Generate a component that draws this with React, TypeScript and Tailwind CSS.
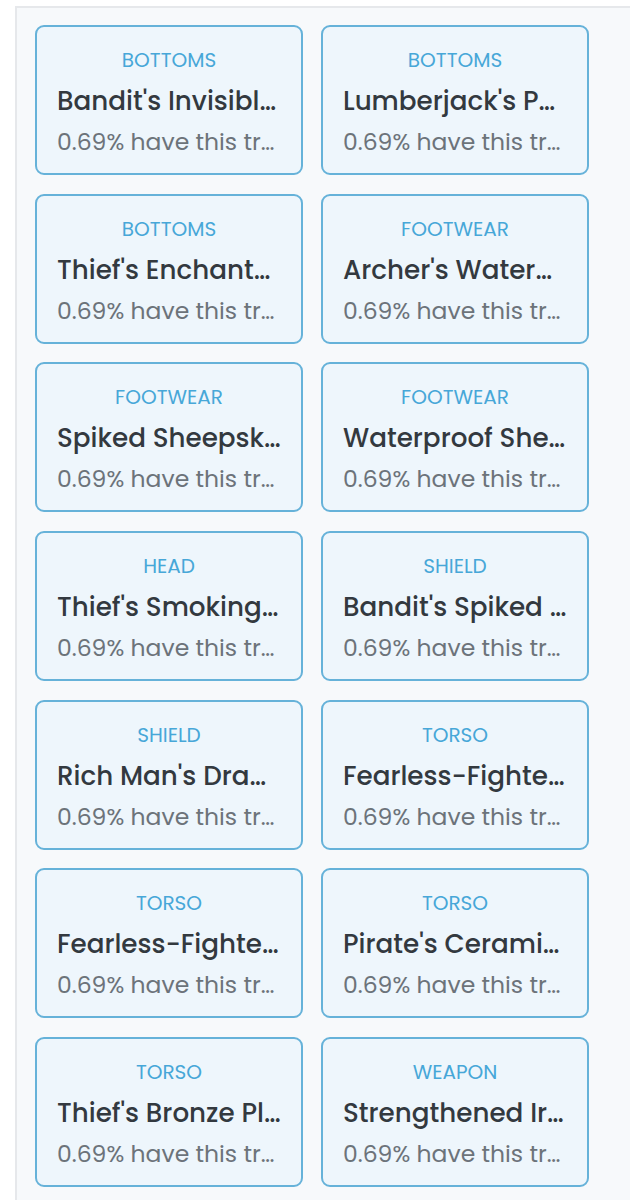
const items = [
  { cat: "BOTTOMS", name: "Bandit's Invisible Trousers" },
  { cat: "BOTTOMS", name: "Lumberjack's Pants" },
  { cat: "BOTTOMS", name: "Thief's Enchanted Pants" },
  { cat: "FOOTWEAR", name: "Archer's Waterproof Boots" },
  { cat: "FOOTWEAR", name: "Spiked Sheepskin Boots" },
  { cat: "FOOTWEAR", name: "Waterproof Sheepskin Boots" },
  { cat: "HEAD", name: "Thief's Smoking Hood" },
  { cat: "SHIELD", name: "Bandit's Spiked Shield" },
  { cat: "SHIELD", name: "Rich Man's Dragon Shield" },
  { cat: "TORSO", name: "Fearless-Fighter Armor" },
  { cat: "TORSO", name: "Fearless-Fighter Vest" },
  { cat: "TORSO", name: "Pirate's Ceramic Plate" },
  { cat: "TORSO", name: "Thief's Bronze Plate" },
  { cat: "WEAPON", name: "Strengthened Iron Sword" },
]

function TraitCard({ cat, name }: { cat: string; name: string }) {
  return (
    <div className="h-[150px] rounded-[9px] border-2 border-[#66b2d9] bg-[#eef6fc] px-5 pt-[21px] text-center">
      <div className="text-[20px] leading-[24px] text-[#47a7d8]">{cat}</div>
      <div className="mt-[12px] truncate text-[26.2px] font-medium leading-[34px] text-[#33393f]">{name}</div>
      <div className="mt-[8px] truncate text-[23.5px] leading-[32px] text-[#6c737a]">
        0.69% have this trait
      </div>
    </div>
  )
}

export default function App() {
  return (
    <div className="min-h-[1200px] bg-white pt-[6px]" style={{ fontFamily: "Poppins, 'Noto Sans', sans-serif" }}>
      <div className="ml-[15px] min-h-[1194px] border-l-2 border-t-2 border-[#e6e8eb] bg-[#f7f9fb] pl-[18px] pt-[17px]">
        <div className="grid grid-cols-[268px_268px] gap-x-[18px] gap-y-[18.7px]">
          {items.map((it, i) => (
            <TraitCard key={i} cat={it.cat} name={it.name} />
          ))}
        </div>
      </div>
    </div>
  )
}
